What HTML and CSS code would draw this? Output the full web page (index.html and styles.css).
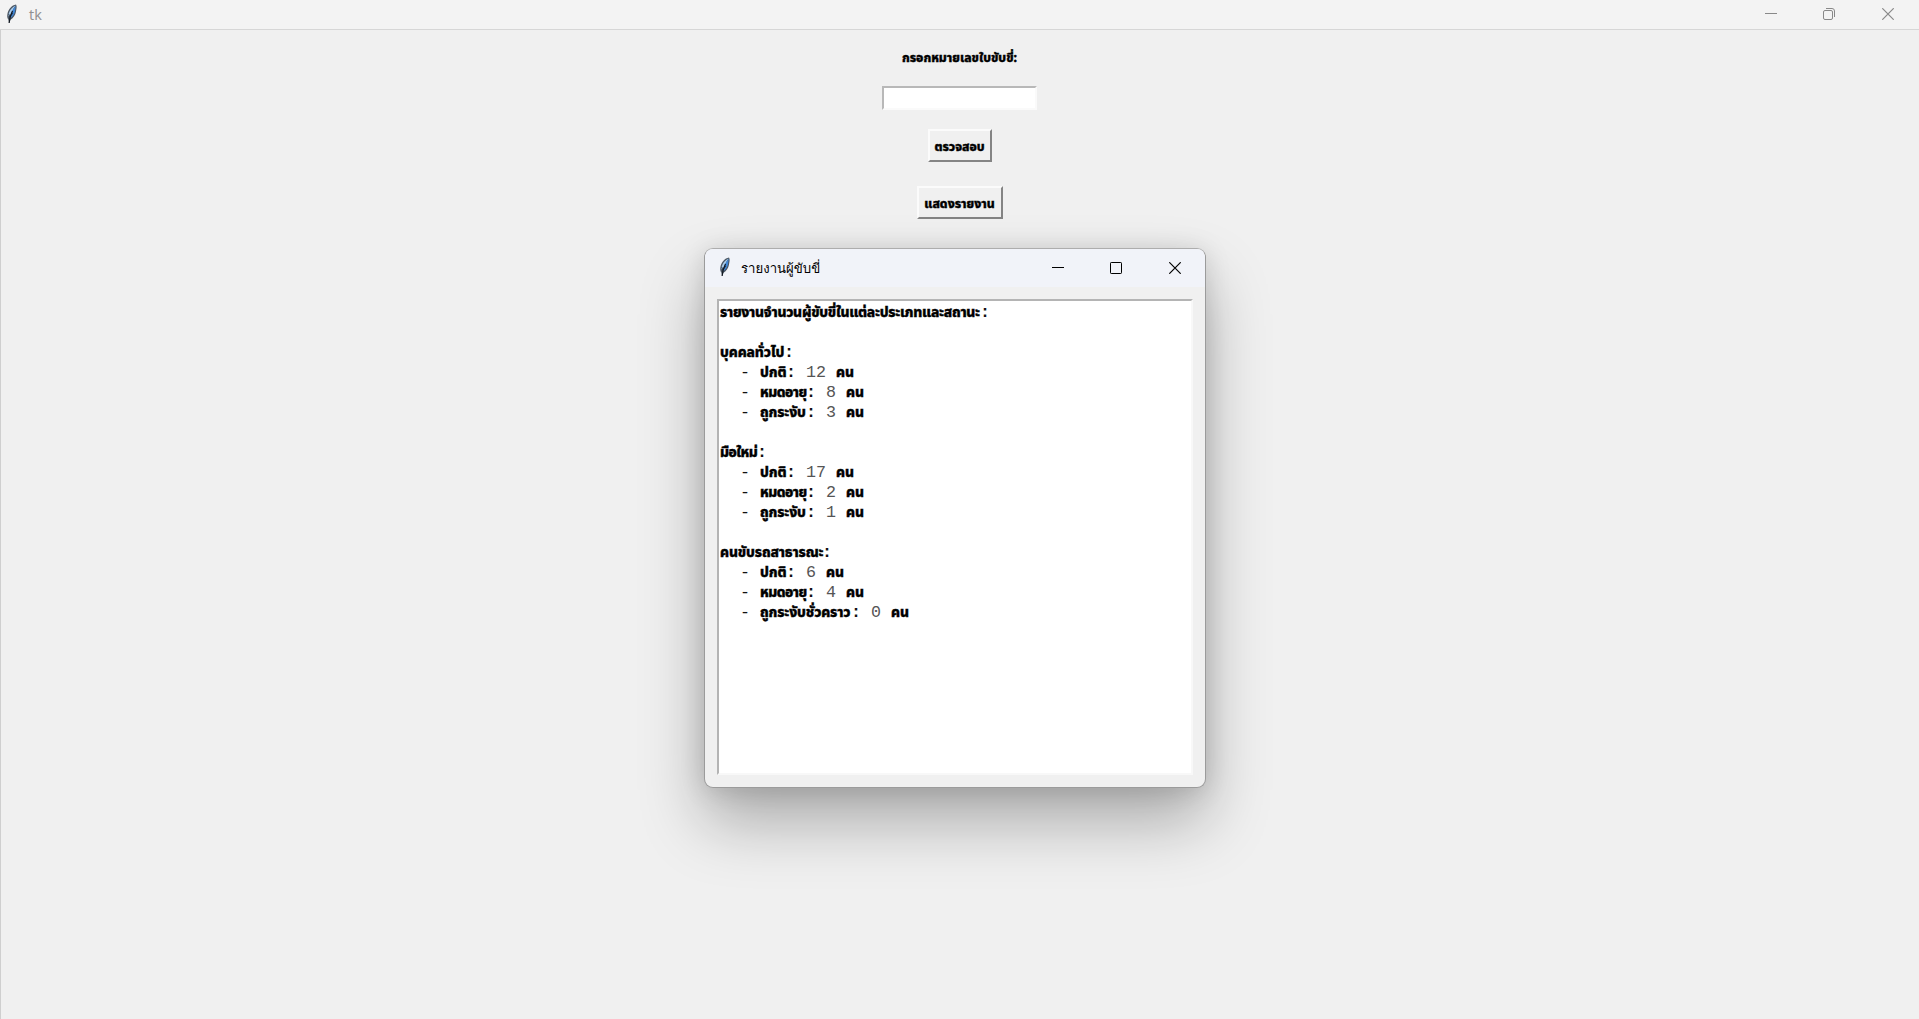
FILE: index.html
```html
<!DOCTYPE html>
<html lang="th">
<head>
<meta charset="utf-8">
<title>tk</title>
<link rel="stylesheet" href="styles.css">
</head>
<body>
<svg class="defs" width="0" height="0">
  <symbol id="feather" viewBox="0 0 12 20">
    <path d="M10 .6C5.800 1.300 2.300 5.500 1.500 9.500C1 12 1.100 14 2.200 15.300L3.200 19L4.500 15.700C7.600 13.800 9.300 11.200 9.900 8C10.300 5.600 11.300 2.500 10 .6Z" fill="#4b5663"/>
    <path d="M9.500 1.500C6 3.200 2.800 7 2.200 12.500L4 11L8.500 3Z" fill="#a9cbea"/>
    <path d="M9.800 1.800L8.900 7.800C7.900 11 6.400 12.900 4.200 14.200L5 9.500L7.500 4.500Z" fill="#3f86d6"/>
    <path d="M6.500 7C5 10 3.600 13 3.100 19" stroke="#10161f" stroke-width="1.200" fill="none"/>
    <path d="M2.800 10L3.500 12.500M7 9L4.500 12" stroke="#141b25" stroke-width=".7" fill="none"/>
  </symbol>
  <symbol id="minimize" viewBox="0 0 12 12"><path d="M0 5.500H12"/></symbol>
  <symbol id="maximize" viewBox="0 0 12 12"><rect x=".5" y=".5" width="11" height="11" rx=".7"/></symbol>
  <symbol id="restore" viewBox="0 0 12 12"><rect x=".5" y="2.500" width="9" height="9" rx="1.500"/><path d="M3 .5H9Q11.500 .5 11.500 3V9"/></symbol>
  <symbol id="close" viewBox="0 0 12 12"><path d="M.3 .3L11.700 11.700M11.700 .3L.3 11.700" stroke-width="1.200"/></symbol>
</svg>
<main class="app">
  <header class="titlebar">
    <svg class="feather"><use href="#feather"/></svg>
    <span class="title">tk</span>
    <div class="controls">
      <svg class="control"><use href="#minimize"/></svg>
      <svg class="control"><use href="#restore"/></svg>
      <svg class="control last"><use href="#close"/></svg>
    </div>
  </header>
  <section class="form">
    <label class="label" for="license">กรอกหมายเลขใบขับขี่:</label>
    <input class="entry" id="license" type="text">
    <button class="button check">ตรวจสอบ</button>
    <button class="button show">แสดงรายงาน</button>
  </section>
</main>
<section class="dialog">
  <header class="dialog-bar">
    <svg class="feather"><use href="#feather"/></svg>
    <span class="dialog-title">รายงานผู้ขับขี่</span>
    <div class="controls">
      <svg class="control"><use href="#minimize"/></svg>
      <svg class="control"><use href="#maximize"/></svg>
      <svg class="control last"><use href="#close"/></svg>
    </div>
  </header>
  <div class="report">
    <div class="line"><span class="th heading" style="width:260px">รายงานจำนวนผู้ขับขี่ในแต่ละประเภทและสถานะ</span><b>:</b></div>
    <div class="line"></div>
    <div class="line"><span class="th" style="width:64px">บุคคลทั่วไป</span><b>:</b></div>
    <div class="line">  - <span class="th" style="width:26px">ปกติ</span><b>:</b> <i>12</i> <span class="th">คน</span></div>
    <div class="line">  - <span class="th tight" style="width:46px">หมดอายุ</span><b>:</b> <i>8</i> <span class="th">คน</span></div>
    <div class="line">  - <span class="th" style="width:46px">ถูกระงับ</span><b>:</b> <i>3</i> <span class="th">คน</span></div>
    <div class="line"></div>
    <div class="line"><span class="th tight" style="width:37px">มือใหม่</span><b>:</b></div>
    <div class="line">  - <span class="th" style="width:26px">ปกติ</span><b>:</b> <i>17</i> <span class="th">คน</span></div>
    <div class="line">  - <span class="th tight" style="width:46px">หมดอายุ</span><b>:</b> <i>2</i> <span class="th">คน</span></div>
    <div class="line">  - <span class="th" style="width:46px">ถูกระงับ</span><b>:</b> <i>1</i> <span class="th">คน</span></div>
    <div class="line"></div>
    <div class="line"><span class="th" style="width:102px">คนขับรถสาธารณะ</span><b>:</b></div>
    <div class="line">  - <span class="th" style="width:26px">ปกติ</span><b>:</b> <i>6</i> <span class="th">คน</span></div>
    <div class="line">  - <span class="th tight" style="width:46px">หมดอายุ</span><b>:</b> <i>4</i> <span class="th">คน</span></div>
    <div class="line">  - <span class="th" style="width:91px">ถูกระงับชั่วคราว</span><b>:</b> <i>0</i> <span class="th">คน</span></div>
  </div>
</section>
</body>
</html>
```
FILE: styles.css
```css
* { box-sizing: border-box; }
html, body { margin: 0; height: 100%; overflow: hidden; background: #f0f0f0; }
.defs { position: absolute; }
.app { height: 100%; display: flex; flex-direction: column; }

.titlebar {
  height: 30px; flex: none; display: flex; align-items: center;
  padding: 0 25px 2px 6px; background: #f3f3f3; border-bottom: 1px solid #d6d6d6;
}
.feather { width: 12px; height: 20px; flex: none; }
.title { margin-left: 11px; padding-top: 1px; font: 14.5px "Open Sans", "Noto Sans", sans-serif; color: #909090; }
.controls { margin-left: auto; display: flex; gap: 46px; color: #888; }
.control { width: 12px; height: 12px; fill: none; stroke: currentColor; stroke-width: 1; display: block; }
.last { margin-left: 1px; }

.form {
  flex: 1; display: flex; flex-direction: column; align-items: center;
  border-left: 1px solid #cfcfcf; padding: 17px 1px 0 0;
}
.label, .button { font: 800 12.2px "Noto Sans Thai", "Loma", sans-serif; color: #000; -webkit-text-stroke: .4px #000; }
.label { height: 22px; line-height: 22px; }
.entry {
  width: 155px; height: 24px; margin-top: 17px; padding: 0 2px; background: #fff;
  border: 2px solid; border-color: #b8b8b8 #fafafa #fafafa #b8b8b8; outline: 0; border-radius: 0;
}
.button {
  height: 33px; padding: 3px 0 0; background: #f0f0f0; border-radius: 0; white-space: nowrap;
  border: 2px solid; border-color: #fbfbfb #848484 #848484 #fbfbfb;
}
.check { width: 64px; margin-top: 19px; }
.show { width: 86px; margin-top: 24px; }

.dialog {
  position: absolute; left: 704px; top: 248px; width: 502px; height: 540px;
  display: flex; flex-direction: column; background: #f0f0f0;
  border: 1px solid #9b9b9b; border-top-color: #adadad; border-radius: 9px;
  box-shadow: 0 34px 64px rgba(0,0,0,.29), 0 2px 26px rgba(0,0,0,.13);
}
.dialog-bar {
  height: 38px; flex: none; display: flex; align-items: center;
  padding: 0 24px 0 14px; background: #f1f3f9; border-radius: 8px 8px 0 0;
}
.dialog-bar .feather { margin-top: -3px; }
.dialog-bar .controls { color: #000; }
.dialog-title { margin-left: 10px; padding-top: 1px; font: 13.2px/20px "Loma", "Noto Sans Thai", sans-serif; color: #000; }
.report {
  flex: 1; margin: 12px; padding: 2px 0 2px 1px; background: #fff; overflow: hidden;
  border: 2px solid; border-color: #b4b4b4 #f8f8f8 #f8f8f8 #b4b4b4;
}
.line {
  height: 20px; line-height: 20px; white-space: pre; color: #111;
  font-family: "Liberation Mono", monospace; font-size: 16.67px;
}
.line i { font-style: normal; color: #555; }
.th {
  display: inline-block; height: 20px; vertical-align: top; color: #000; letter-spacing: -.12px;
  font: 800 13.8px/20px "Noto Sans Thai", "Loma", sans-serif; -webkit-text-stroke: .4px #000;
}
.tight { letter-spacing: -.5px; }
.heading { letter-spacing: -.26px; }
```
